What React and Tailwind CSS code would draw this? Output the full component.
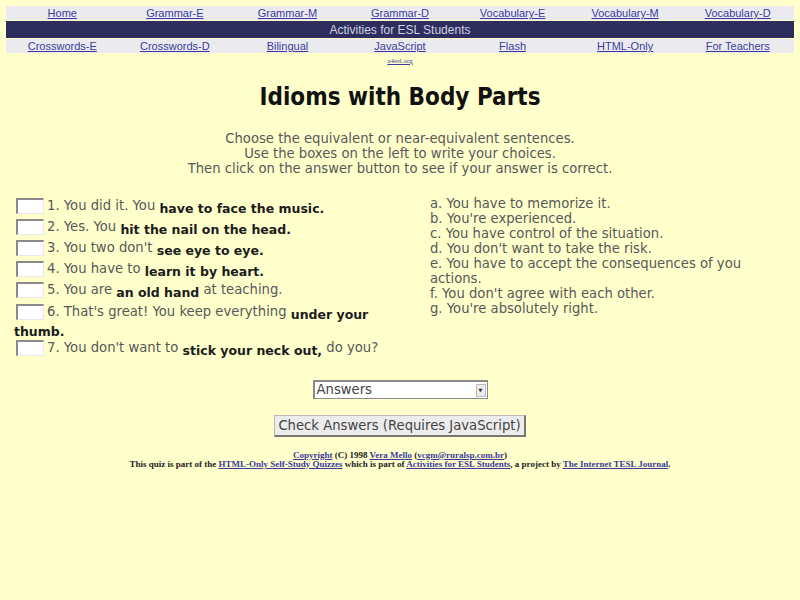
import React from 'react';

// Quiz page: "Idioms with Body Parts" matching exercise
const topLinks = ['Home', 'Grammar-E', 'Grammar-M', 'Grammar-D', 'Vocabulary-E', 'Vocabulary-M', 'Vocabulary-D'];
const bottomLinks = ['Crosswords-E', 'Crosswords-D', 'Bilingual', 'JavaScript', 'Flash', 'HTML-Only', 'For Teachers'];

const questions = [
  { n: 1, pre: 'You did it. You', idiom: 'have to face the music.', post: '' },
  { n: 2, pre: 'Yes. You', idiom: 'hit the nail on the head.', post: '' },
  { n: 3, pre: "You two don't", idiom: 'see eye to eye.', post: '' },
  { n: 4, pre: 'You have to', idiom: 'learn it by heart.', post: '' },
  { n: 5, pre: 'You are', idiom: 'an old hand', post: 'at teaching.' },
  { n: 6, pre: "That's great! You keep everything", idiom: 'under your thumb.', post: '' },
  { n: 7, pre: "You don't want to", idiom: 'stick your neck out,', post: 'do you?' },
];

const answers = [
  'a. You have to memorize it.',
  "b. You're experienced.",
  'c. You have control of the situation.',
  "d. You don't want to take the risk.",
  'e. You have to accept the consequences of you actions.',
  "f. You don't agree with each other.",
  "g. You're absolutely right.",
];

const NavRow = ({ links }) => (
  <div className="grid grid-cols-7 h-[14px] bg-[#ebebef] items-center">
    {links.map((l) => (
      <a key={l} href="#" className="text-center text-[11px] leading-[14px] text-[#3b3b9c] underline">
        {l}
      </a>
    ))}
  </div>
);

const AnswerBox = () => (
  <span className="inline-block align-[-4px] w-[28px] h-[16px] mr-[3px] bg-white border-t-2 border-l-2 border-[#8a8a8a] border-b border-r border-b-[#e8e8e8] border-r-[#e8e8e8]" />
);

export default function App() {
  return (
    <div className="min-h-[600px] bg-[#ffffcc] pt-[6px] font-['DejaVu_Sans',sans-serif]">
      {/* site navigation */}
      <div className="mx-[6px] font-['Liberation_Sans',Arial,sans-serif] flex flex-col gap-px">
        <NavRow links={topLinks} />
        <div className="h-[17px] bg-[#2d2d5e] flex items-center justify-center text-[12px] text-[#d2d2e2]">
          Activities for ESL Students
        </div>
        <NavRow links={bottomLinks} />
      </div>
      <div className="text-center leading-[8px] pt-px">
        <a href="#" className="text-[7px] text-[#3b3b9c] underline font-['Liberation_Serif',serif]">a4esl.org</a>
      </div>

      <h1 className="text-center mt-[17px] text-[24px] leading-[30px] font-bold text-[#111] font-['DejaVu_Sans_Condensed','DejaVu_Sans',sans-serif]">
        Idioms with Body Parts
      </h1>

      <div className="text-center mt-[19px] text-[13.2px] leading-[15px] text-[#585858]">
        <p>Choose the equivalent or near-equivalent sentences.</p>
        <p>Use the boxes on the left to write your choices.</p>
        <p>Then click on the answer button to see if your answer is correct.</p>
      </div>

      {/* matching exercise */}
      <div className="flex mt-[19px] pl-[14px]">
        <div className="w-[380px] text-[13.2px] text-[#585858]">
          {questions.map((q) => (
            <div key={q.n} className={q.n === 6 ? 'leading-[17px] pt-[3px]' : 'h-[21px] leading-[21px]'}>
              <span className="pl-[2px]"><AnswerBox /></span>
              {q.n}. {q.pre}{' '}
              <b className="relative top-[3px] text-[12.5px] leading-[12px] text-[#1c1c1c]">{q.idiom}</b>
              {q.post && <> {q.post}</>}
            </div>
          ))}
        </div>
        <div className="ml-[36px] w-[350px] mt-[1px] text-[13.2px] leading-[15px] text-[#585858]">
          {answers.map((a) => (
            <p key={a}>{a}</p>
          ))}
        </div>
      </div>

      <div className="flex flex-col items-center mt-[22px]">
        <div className="w-[175px] h-[19px] bg-white border border-[#8a8a8a] border-t-2 border-l-2 flex items-center justify-between pl-[2px] pr-px text-[13.2px] text-[#444]">
          <span>Answers</span>
          <span className="w-[10px] h-[13px] bg-[#ececec] border border-[#bbb] flex items-center justify-center text-[5px] leading-none text-[#333]">▼</span>
        </div>
        <button className="mt-[16px] h-[22px] px-[3px] bg-[#ececec] border border-[#bbb] border-r-2 border-b-2 border-r-[#777] border-b-[#777] text-[13.2px] leading-[17px] text-[#444]">
          Check Answers (Requires JavaScript)
        </button>
      </div>

      {/* credits */}
      <div className="mt-[14px] text-center text-[9px] leading-[9px] font-bold text-[#222] font-['Liberation_Serif',serif]">
        <p>
          <a href="#" className="text-[#3b3b9c] underline">Copyright</a> (C) 1998{' '}
          <a href="#" className="text-[#3b3b9c] underline">Vera Mello</a> (
          <a href="#" className="text-[#3b3b9c] underline">vcgm@ruralsp.com.br</a>)
        </p>
        <p>
          This quiz is part of the{' '}
          <a href="#" className="text-[#3b3b9c] underline">HTML-Only Self-Study Quizzes</a> which is part of{' '}
          <a href="#" className="text-[#3b3b9c] underline">Activities for ESL Students</a>, a project by{' '}
          <a href="#" className="text-[#3b3b9c] underline">The Internet TESL Journal</a>.
        </p>
      </div>
    </div>
  );
}
